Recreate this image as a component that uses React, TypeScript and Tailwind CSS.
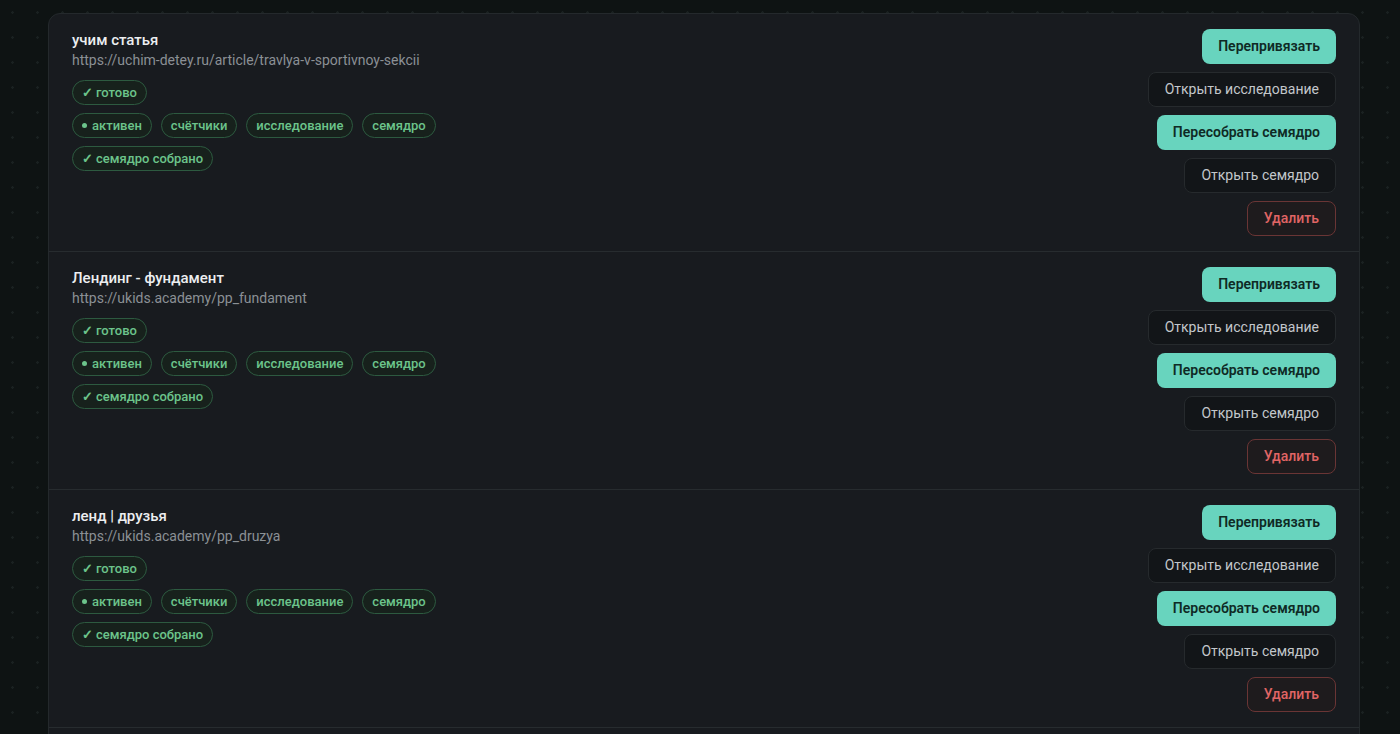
type Item = { title: string; url: string }

const items: Item[] = [
  { title: 'учим статья', url: 'https://uchim-detey.ru/article/travlya-v-sportivnoy-sekcii' },
  { title: 'Лендинг - фундамент', url: 'https://ukids.academy/pp_fundament' },
  { title: 'ленд | друзья', url: 'https://ukids.academy/pp_druzya' },
]

function Chip({ children }: { children: React.ReactNode }) {
  return (
    <span className="inline-flex h-[25px] items-center gap-[3px] rounded-full border border-[#2d5a40] bg-[#17211c] px-[9px] text-[13px] font-medium text-[#6cc48b]">
      {children}
    </span>
  )
}

const Tick = () => <span className="text-[13px] font-bold">✓</span>

function Row({ item }: { item: Item }) {
  return (
    <div className="flex justify-between border-b border-[#272c2f] px-[23px] py-[15px]">
      <div className="pt-[1px]">
        <div className="text-[15px] font-medium leading-5 text-[#eceef0]">{item.title}</div>
        <div className="text-[14px] leading-5 text-[#8b9095]">{item.url}</div>
        <div className="mt-[10px] flex flex-col gap-2">
          <div className="flex gap-[9px]">
            <Chip>
              <Tick />
              готово
            </Chip>
          </div>
          <div className="flex gap-[9px]">
            <Chip>
              <span className="mr-[2px] h-[5px] w-[5px] rounded-full bg-[#6cc48b]" />
              активен
            </Chip>
            <Chip>счётчики</Chip>
            <Chip>исследование</Chip>
            <Chip>семядро</Chip>
          </div>
          <div className="flex gap-[9px]">
            <Chip>
              <Tick />
              семядро собрано
            </Chip>
          </div>
        </div>
      </div>

      <div className="flex flex-col items-end gap-2">
        <button className="h-[35px] rounded-lg bg-[#68d4be] px-4 text-[14px] font-semibold text-[#0f2a25]">
          Перепривязать
        </button>
        <button className="h-[35px] rounded-lg border border-[#262a2d] bg-[#121518] px-4 text-[14px] text-[#c3c7cb]">
          Открыть исследование
        </button>
        <button className="h-[35px] rounded-lg bg-[#68d4be] px-4 text-[14px] font-semibold text-[#0f2a25]">
          Пересобрать семядро
        </button>
        <button className="h-[35px] rounded-lg border border-[#262a2d] bg-[#121518] px-4 text-[14px] text-[#c3c7cb]">
          Открыть семядро
        </button>
        <button className="h-[35px] rounded-lg border border-[#6a3535] bg-[#1e1b1d] px-4 text-[14px] font-medium text-[#e06565]">
          Удалить
        </button>
      </div>
    </div>
  )
}

export default function App() {
  return (
    <div
      className="h-[734px] overflow-hidden bg-[#0e1313] bg-[radial-gradient(circle,#1a2121_1px,transparent_1.5px)] bg-[size:25px_25px] pl-[48px] pr-[40px] pt-[13px]"
      style={{ fontFamily: 'Roboto, "Noto Sans", sans-serif' }}
    >
      <div className="overflow-hidden rounded-xl border border-[#24292c] bg-[#181b1f]">
        {items.map(it => (
          <Row key={it.url} item={it} />
        ))}
        <div className="h-20" />
      </div>
    </div>
  )
}
